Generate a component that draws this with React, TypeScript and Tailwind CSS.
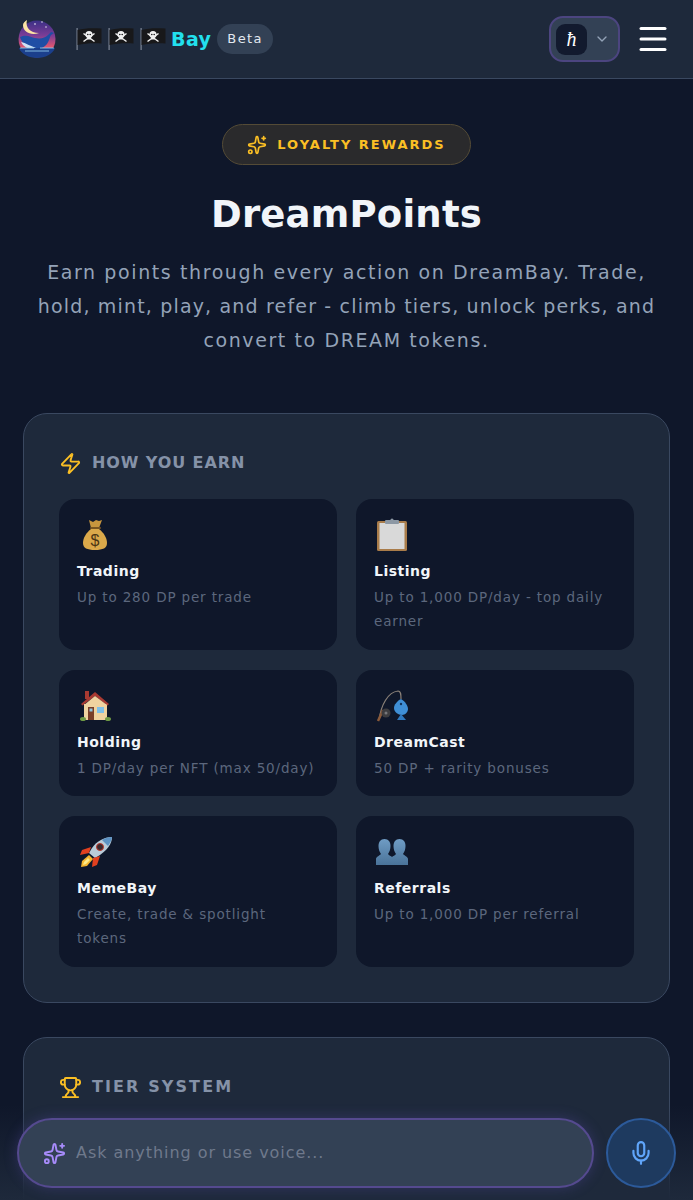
import React from 'react';
import { ChevronDown, Menu, Mic, Sparkles, Trophy, Zap } from 'lucide-react';

function Logo() {
  return (
    <svg width="38" height="40" viewBox="0 0 38 40" className="shrink-0">
      <defs>
        <linearGradient id="sky" x1="0" y1="0" x2="0" y2="1">
          <stop offset="0" stopColor="#3a2f86" />
          <stop offset="0.4" stopColor="#7a3d96" />
          <stop offset="0.72" stopColor="#e2566f" />
        </linearGradient>
      </defs>
      <circle cx="19" cy="20" r="18.5" fill="url(#sky)" />
      <path d="M9 1c-2 7 3 13 12 13c-8 3-16-1-16-8c0-2 2-4 4-5z" fill="#fce3a4" />
      <circle cx="17" cy="5" r="0.8" fill="#fff" />
      <circle cx="24" cy="3" r="0.7" fill="#fff" />
      <circle cx="28" cy="8" r="0.7" fill="#fff" />
      <path d="M2 18c6-3 11 0 15 1c6 1 10 0 13-3l3-3l3 1l-3 2c-1 1-1 3-2 5c-2 6-7 9-13 9c-8 0-14-5-16-12z" fill="#1f4ea5" />
      <path d="M3 23c5 1 9 4 15 6c-6 2-12 0-15-6z" fill="#cfe0f5" />
      <path d="M1 29h36c-2 6-10 10-18 10S3 35 1 29z" fill="#1b3f8c" />
      <path d="M2 29h14M22 29h14M7 32h24" stroke="#8fc8ea" strokeWidth="0.9" />
    </svg>
  );
}

function Flag() {
  return (
    <svg width="27" height="26" viewBox="0 0 27 26" className="shrink-0">
      <rect x="0.5" y="2" width="1.2" height="22" fill="#7f8897" />
      <path d="M1.5 4c7-2 15-2 24-1.500v15c-8-.7-17 0-24 1.500z" fill="#18181a" />
      <circle cx="13" cy="8.500" r="3.600" fill="#f0f0f0" />
      <rect x="11.200" y="10.500" width="3.600" height="3" fill="#f0f0f0" />
      <path d="M7.500 7.500l11 8M18.500 7.500l-11 8" stroke="#f0f0f0" strokeWidth="1.500" />
      <circle cx="11.800" cy="8.500" r="0.800" fill="#18181a" />
      <circle cx="14.200" cy="8.500" r="0.800" fill="#18181a" />
    </svg>
  );
}

function MoneyBag() {
  return (
    <svg width="32" height="32" viewBox="0 0 32 32">
      <path d="M10 1l4 2l3-2l3 1l3-1l-3 8h-8z" fill="#c8963e" />
      <rect x="11" y="8" width="11" height="2" rx="1" fill="#7a5520" />
      <path d="M12 10c-5 4-8 9-8 14c0 5 4 7 12 7s12-2 12-7c0-5-3-10-8-14z" fill="#dba94a" />
      <text x="16" y="27" textAnchor="middle" fontSize="16" fontFamily="Liberation Sans, sans-serif" fill="#4b3514">$</text>
    </svg>
  );
}

function Clipboard() {
  return (
    <svg width="32" height="34" viewBox="0 0 32 34">
      <rect x="1" y="3" width="30" height="30" rx="1.500" fill="#a97c4a" />
      <rect x="3.500" y="5" width="25" height="26" fill="#d9d9d9" />
      <rect x="9" y="2" width="14" height="4" rx="1" fill="#8d98a4" />
      <circle cx="16" cy="2" r="1.600" fill="#8d98a4" />
    </svg>
  );
}

function House() {
  return (
    <svg width="32" height="32" viewBox="0 0 32 32">
      <rect x="6" y="1" width="4" height="8" fill="#a83a32" />
      <rect x="5" y="14" width="23" height="16" fill="#f0d3a0" />
      <path d="M16 2L2 14l1.500 1.500L16 6l12.500 9.500L30 14z" fill="#a83a32" />
      <path d="M16 6L5 15h23z" fill="#f0d3a0" />
      <rect x="9" y="17" width="6" height="13" fill="#7a3f28" />
      <rect x="10.500" y="18.500" width="3" height="3" fill="#8fc4de" />
      <rect x="18" y="17" width="7" height="6" fill="#7fc0e8" />
      <ellipse cx="4" cy="29" rx="3" ry="2" fill="#6f9a45" />
      <ellipse cx="29" cy="29" rx="3" ry="2" fill="#6f9a45" />
    </svg>
  );
}

function Rod() {
  return (
    <svg width="36" height="34" viewBox="0 0 36 34">
      <path d="M3 31C5 16 12 3 22 2c3 0 3 4 3 8" fill="none" stroke="#8a8078" strokeWidth="1.200" />
      <path d="M2 32l5-11" stroke="#8a5a3a" strokeWidth="2.500" />
      <circle cx="10" cy="24" r="4.500" fill="#3d3d40" />
      <circle cx="10" cy="24" r="1.500" fill="#77777a" />
      <path d="M25 10c4 2 7 7 7 10c0 3-3 6-6 6c-4 0-8-3-8-7c0-3 3-7 7-9z" fill="#3f8fd6" />
      <path d="M25 25l-4 6h9z" fill="#2f78bd" />
      <circle cx="25" cy="15" r="1.200" fill="#12345c" />
    </svg>
  );
}

function Rocket() {
  return (
    <svg width="34" height="32" viewBox="0 0 34 32">
      <path d="M33 1c-8 0-15 4-20 11l-3 5l6 5l5-3c7-5 12-11 12-18z" fill="#b9cbd8" />
      <path d="M33 1c-4 0-7 1-10 3l6 6c2-3 4-6 4-9z" fill="#5d93c4" />
      <circle cx="21" cy="11" r="3.500" fill="#3a2a30" stroke="#c0392b" strokeWidth="1" />
      <path d="M12 11l-9 3l-2 5l9-2z" fill="#e2401f" />
      <path d="M21 20l-3 9l-5 2l1-9z" fill="#e2401f" />
      <path d="M10 19l-7 6l-1 6l6-1l6-7z" fill="#f5b52e" />
      <path d="M9 22l-4 4l-1 3l3-1l4-4z" fill="#fdeb8a" />
    </svg>
  );
}

function People() {
  return (
    <svg width="32" height="26" viewBox="0 0 32 26">
      <defs>
        <linearGradient id="bust" x1="0" y1="0" x2="0" y2="1">
          <stop offset="0" stopColor="#6f9cc4" />
          <stop offset="1" stopColor="#4a7399" />
        </linearGradient>
      </defs>
      <path d="M8.500 0c4 0 6 3 6 7c0 3-1 6-2.500 8c1 1.500 3 2 4 3v8H0v-6c0-2 3-3 5-5C3.500 13 2.500 10 2.500 7c0-4 2-7 6-7z" fill="url(#bust)" />
      <path d="M23.500 0c4 0 6 3 6 7c0 3-1 6-2.500 8c2 2 5 3 5 5v6H16v-8c1-1 3-1.500 4-3c-1.500-2-2.500-5-2.500-8c0-4 2-7 6-7z" fill="url(#bust)" />
    </svg>
  );
}

const earnItems = [
  { icon: <MoneyBag />, title: 'Trading', text: 'Up to 280 DP per trade', tall: true },
  { icon: <Clipboard />, title: 'Listing', text: 'Up to 1,000 DP/day - top daily earner', tall: true },
  { icon: <House />, title: 'Holding', text: '1 DP/day per NFT (max 50/day)', tall: false },
  { icon: <Rod />, title: 'DreamCast', text: '50 DP + rarity bonuses', tall: false },
  { icon: <Rocket />, title: 'MemeBay', text: 'Create, trade & spotlight tokens', tall: true },
  { icon: <People />, title: 'Referrals', text: 'Up to 1,000 DP per referral', tall: true },
];

export default function App() {
  return (
    <div className="relative h-[1200px] overflow-hidden bg-[#0f172a] font-['DejaVu_Sans',sans-serif]">
      {/* Header */}
      <header className="flex h-[79px] items-center justify-between border-b border-[#3a4860] bg-[#1e293b] pl-[18px] pr-[22px]">
        <div className="flex items-center">
          <Logo />
          <div className="ml-[20px] flex items-center gap-[5px]">
            <Flag />
            <Flag />
            <Flag />
          </div>
          <span className="ml-[4px] text-[19px] font-bold tracking-[0.4px] text-[#22e0ee]">Bay</span>
          <span className="ml-[6px] rounded-full bg-[#334155] px-[10px] py-[5px] text-[13px] leading-[20px] tracking-[1.4px] text-[#e2e8f0]">
            Beta
          </span>
        </div>
        <div className="flex items-center gap-[15px]">
          <div className="flex h-[46px] w-[71px] items-center gap-[7px] rounded-[14px] border-2 border-[#4c4580] bg-[#334155] pl-[5px]">
            <div className="flex h-[31px] w-[31px] items-center justify-center rounded-[9px] bg-[#121a2e] font-['Liberation_Serif',serif] text-[20px] italic text-white">
              ħ
            </div>
            <ChevronDown className="h-[16px] w-[16px] text-[#94a3b8]" />
          </div>
          <Menu className="h-[36px] w-[36px] text-white" strokeWidth={2} />
        </div>
      </header>

      {/* Hero */}
      <section className="flex flex-col items-center px-[24px] pt-[45px] text-center">
        <div className="flex h-[41px] w-[249px] items-center justify-center gap-[10px] rounded-full border border-[#544b36] bg-[#2a2a2c] text-[13px] font-bold tracking-[2px] text-[#fbbf24]">
          <Sparkles className="h-[20px] w-[20px]" />
          LOYALTY REWARDS
        </div>
        <h1 className="mt-[26px] text-[37px] font-bold leading-[48px] tracking-[0.2px] text-[#f1f5f9]">DreamPoints</h1>
        <p className="mt-[16px] whitespace-nowrap text-[19px] leading-[34px] tracking-[1.6px] text-[#94a3b8]">
          Earn points through every action on DreamBay. Trade,
          <br />
          <span className="tracking-[1.17px]">hold, mint, play, and refer - climb tiers, unlock perks, and</span>
          <br />
          convert to DREAM tokens.
        </p>
      </section>

      {/* How you earn */}
      <section className="mx-[23px] mt-[56px] rounded-[24px] border border-[#3a4860] bg-[#1e293b] p-[35px]">
        <div className="flex h-[28px] items-center gap-[10px]">
          <Zap className="h-[23px] w-[23px] text-[#fbbf24]" />
          <h2 className="text-[16px] font-bold tracking-[0.9px] text-[#8592a8]">HOW YOU EARN</h2>
        </div>
        <div className="mt-[22px] grid grid-cols-2 gap-x-[19px] gap-y-[20px]">
          {earnItems.map((item) => (
            <div
              key={item.title}
              className={`rounded-[16px] bg-[#0f172a] pl-[18px] pr-[22px] pt-[18px] ${item.tall ? 'h-[151px]' : 'h-[126px]'}`}
            >
              <div className="flex h-[36px] items-center pl-[2px]">{item.icon}</div>
              <h3 className="mt-[6px] text-[14px] font-bold leading-[24px] tracking-[0.5px] text-[#f1f5f9]">{item.title}</h3>
              <p className="mt-[2px] text-[13.5px] leading-[24px] tracking-[0.85px] text-[#5c677d]">{item.text}</p>
            </div>
          ))}
        </div>
      </section>

      {/* Tier system */}
      <section className="mx-[23px] mt-[34px] h-[300px] rounded-[24px] border border-[#3a4860] bg-[#1e293b] px-[35px] pt-[35px]">
        <div className="flex h-[28px] items-center gap-[10px]">
          <Trophy className="h-[23px] w-[23px] text-[#fbbf24]" />
          <h2 className="text-[16px] font-bold tracking-[2.1px] text-[#8592a8]">TIER SYSTEM</h2>
        </div>
      </section>

      {/* Ask bar */}
      <div className="absolute inset-x-0 bottom-0 flex h-[95px] items-start gap-[12px] bg-gradient-to-b from-transparent to-[#1e293b] px-[17px] pt-[13px]">
        <div className="flex h-[70px] flex-1 items-center gap-[10px] rounded-full border-2 border-[#554a8f] bg-[#334155] pl-[24px] shadow-[0_0_14px_rgba(99,82,190,0.3)]">
          <Sparkles className="h-[23px] w-[23px] text-[#a78bfa]" />
          <span className="text-[16px] tracking-[0.95px] text-[#6f798c]">Ask anything or use voice...</span>
        </div>
        <div className="flex h-[70px] w-[70px] items-center justify-center rounded-full border-2 border-[#2c5a9a] bg-[#1e3a5f]">
          <Mic className="h-[26px] w-[26px] text-[#60a5fa]" />
        </div>
      </div>
    </div>
  );
}
